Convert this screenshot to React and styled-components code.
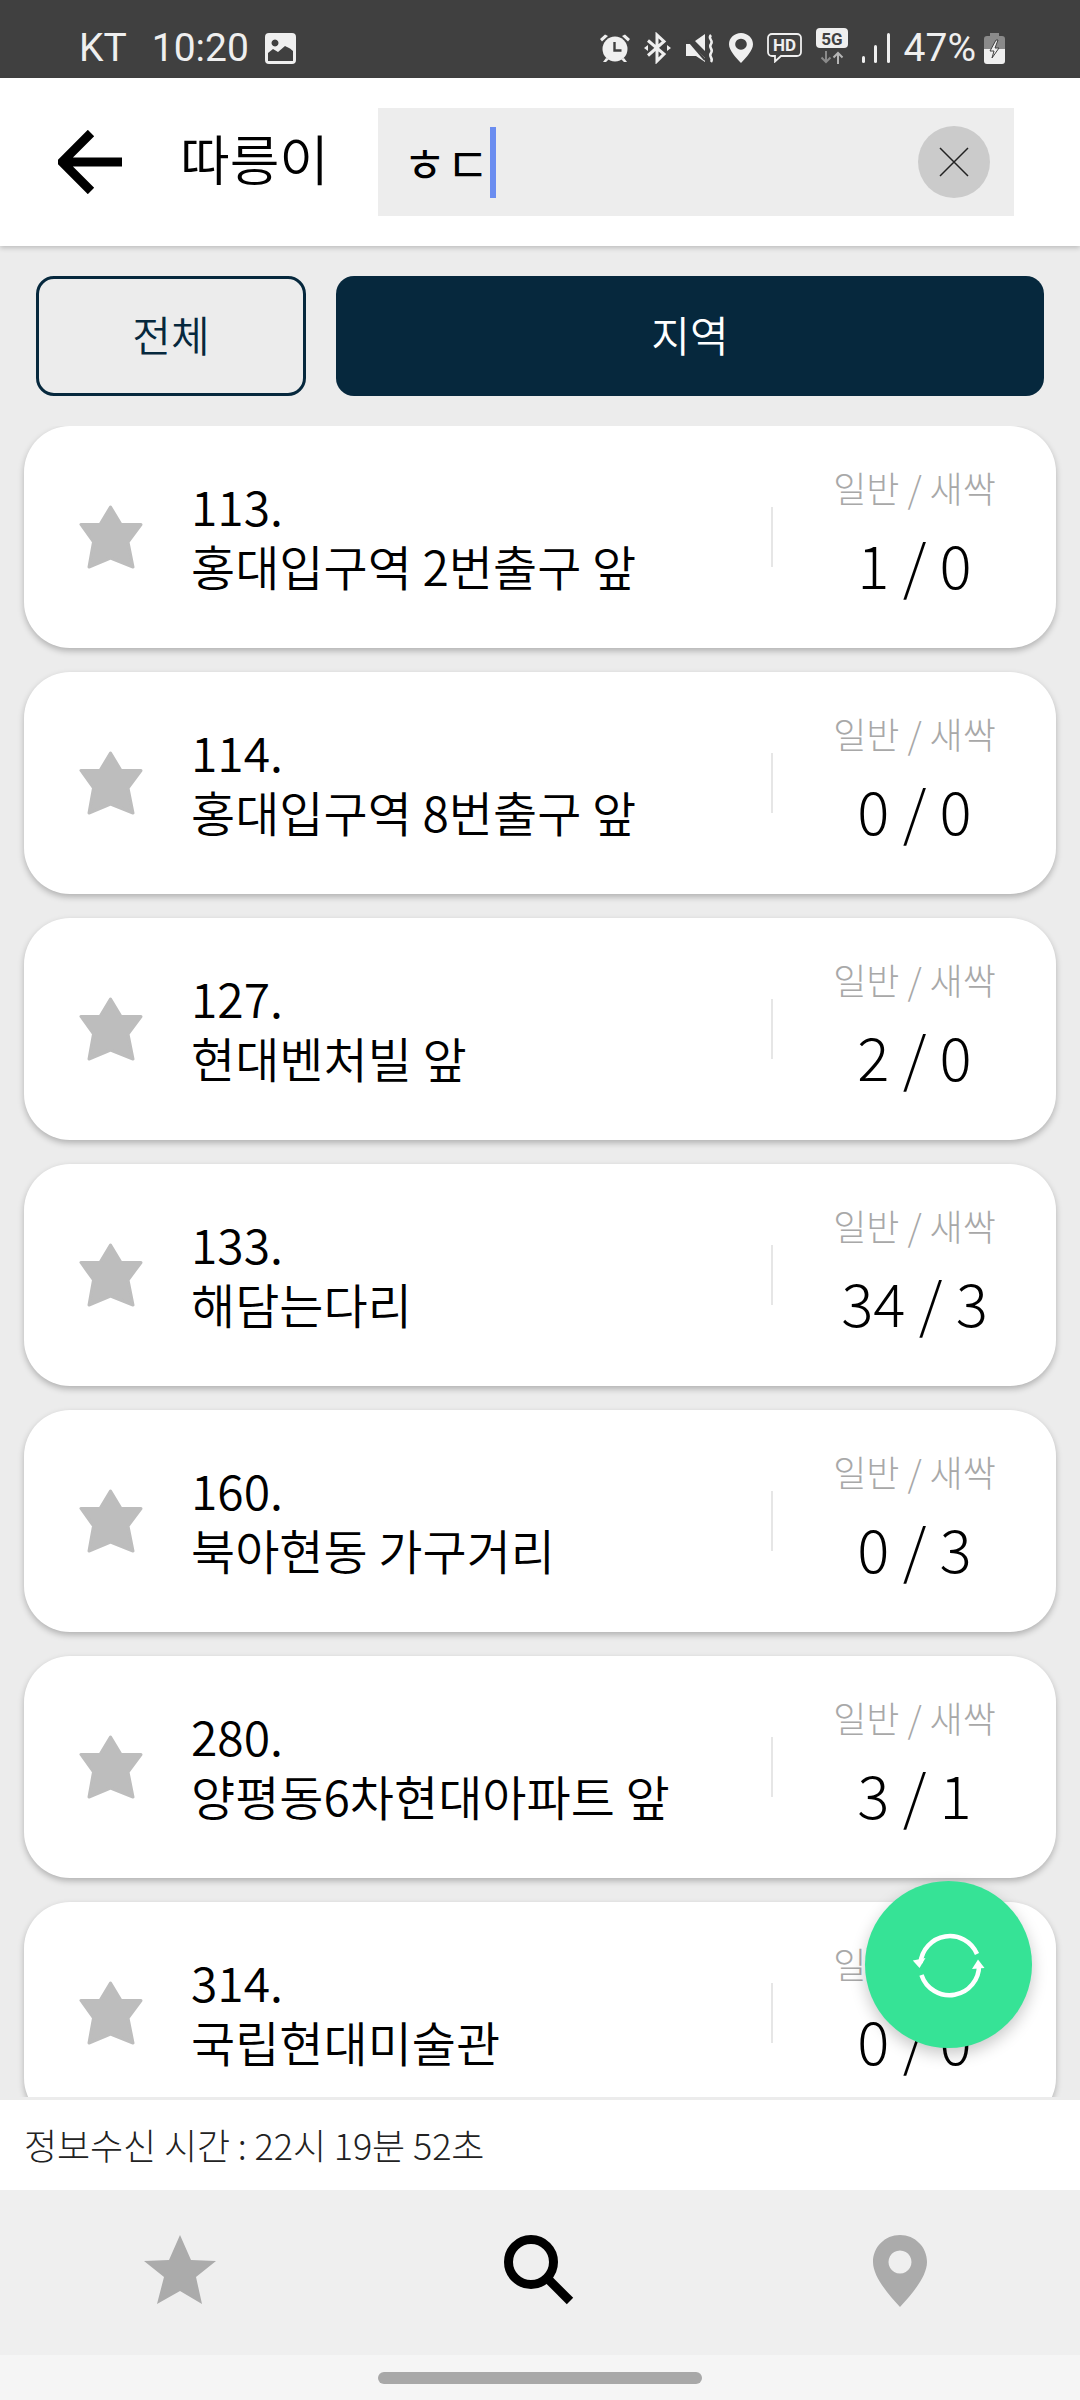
import styled, { createGlobalStyle } from 'styled-components'

const GlobalStyle = createGlobalStyle`
    html, body {
        margin: 0;
        padding: 0;
        background: #ececec;
    }
    * {
        box-sizing: border-box;
    }
`

const Page = styled.div`
    width: 1080px;
    height: 2400px;
    position: relative;
    display: flex;
    flex-direction: column;
    overflow: hidden;
    background: #ececec;
    color: #000;
    font-family: "Noto Sans CJK KR", "Noto Sans", sans-serif;
`

const StatusBar = styled.div`
    height: 78px;
    flex: none;
    background: #404040;
    color: #efefef;
    display: flex;
    align-items: center;
    justify-content: space-between;
    padding: 18px 75px 0 79px;
    font-family: Roboto, sans-serif;
    font-size: 39px;
    line-height: 1;
`

const StatusGroup = styled.div`
    display: flex;
    align-items: center;
    gap: ${(p) => p.$gap}px;
`

const StatusText = styled.span`
    margin-right: ${(p) => p.$after || 0}px;
`

const Header = styled.header`
    height: 168px;
    flex: none;
    background: #fff;
    display: flex;
    align-items: center;
    padding-left: 58px;
    box-shadow: 0 2px 5px rgba(0, 0, 0, 0.2);
    position: relative;
    z-index: 2;
`

const BackArrow = styled.svg`
    width: 64px;
    height: 64px;
    flex: none;
    fill: none;
    stroke: #000;
    stroke-width: 9;
`

const Title = styled.h1`
    margin: 0 0 8px 58px;
    width: 198px;
    flex: none;
    font-size: 54px;
    font-weight: 350;
    line-height: 60px;
`

const SearchBox = styled.div`
    width: 636px;
    height: 108px;
    background: #ededed;
    display: flex;
    align-items: center;
    padding: 0 24px 0 25px;
`

const SearchText = styled.span`
    font-size: 47px;
    line-height: 50px;
`

const Caret = styled.span`
    width: 6px;
    height: 71px;
    background: #6b8df0;
    margin-left: 1px;
`

const ClearButton = styled.button`
    width: 72px;
    height: 72px;
    margin-left: auto;
    padding: 0;
    border: none;
    border-radius: 50%;
    background: #cbcbcb;
    display: flex;
    align-items: center;
    justify-content: center;
`

const Tabs = styled.div`
    display: flex;
    gap: 30px;
    padding: 30px 36px;
    flex: none;
`

const Tab = styled.button`
    height: 120px;
    width: ${(p) => (p.$wide ? 708 : 270)}px;
    flex: none;
    border: ${(p) => (p.$active ? 'none' : '3px solid #06283d')};
    border-radius: 18px;
    background: ${(p) => (p.$active ? '#06283d' : 'transparent')};
    color: ${(p) => (p.$active ? '#fff' : '#06283d')};
    font-family: inherit;
    font-size: 42px;
    font-weight: 350;
    padding: 0 0 6px;
`

const List = styled.div`
    flex: 1;
    min-height: 0;
    overflow: hidden;
    padding: 0 24px;
    display: flex;
    flex-direction: column;
    gap: 24px;
`

const Card = styled.div`
    height: 222px;
    flex: none;
    background: #fff;
    border-radius: 46px;
    box-shadow: 0 3px 6px rgba(0, 0, 0, 0.25);
    display: flex;
    align-items: center;
    padding-left: 55px;
`

const CardStar = styled.svg`
    width: 64px;
    height: 64px;
    flex: none;
    fill: #bdbdbd;
    stroke: #bdbdbd;
    stroke-width: 3;
    stroke-linejoin: round;
`

const StationInfo = styled.div`
    flex: 1;
    margin: -4px 0 0 48px;
    font-size: 48px;
    font-weight: 350;
`

const StationNo = styled.div`
    line-height: 58px;
    margin-bottom: 2px;
`

const StationName = styled.div`
    line-height: 58px;
`

const Divider = styled.div`
    width: 2px;
    height: 60px;
    background: #e6e6e6;
    flex: none;
`

const Stats = styled.div`
    width: 283px;
    flex: none;
    display: flex;
    flex-direction: column;
    align-items: center;
    margin-top: -6px;
`

const StatsLabel = styled.div`
    font-size: 36px;
    line-height: 50px;
    font-weight: 300;
    color: #a8a8a8;
    margin-top: -3px;
`

const StatsValue = styled.div`
    font-size: 60px;
    line-height: 80px;
    font-weight: 200;
    margin-top: 11px;
`

const InfoBar = styled.div`
    height: 90px;
    flex: none;
    background: #fff;
    margin-top: 3px;
    display: flex;
    align-items: center;
    padding: 0 0 2px 24px;
    font-size: 36px;
    font-weight: 300;
    letter-spacing: -0.1px;
    color: #222;
`

const BottomNav = styled.nav`
    height: 165px;
    flex: none;
    background: #efefef;
    display: grid;
    grid-template-columns: repeat(3, 360px);
    justify-items: center;
    padding-top: 45px;
`

const NavItem = styled.div`
    width: 80px;
    height: 72px;
    display: flex;
    justify-content: center;
`

const NavStar = styled.svg`
    width: 72px;
    height: 69px;
    fill: #ababab;
`

const GestureBar = styled.div`
    height: 45px;
    flex: none;
    background: #f5f5f5;
    display: flex;
    justify-content: center;
    padding-top: 17px;
`

const GesturePill = styled.div`
    width: 324px;
    height: 12px;
    border-radius: 6px;
    background: #a8a8a8;
`

const Fab = styled.button`
    position: absolute;
    left: 865px;
    top: 1881px;
    width: 167px;
    height: 167px;
    padding: 0;
    border: none;
    border-radius: 50%;
    background: #36e396;
    box-shadow: 0 6px 16px rgba(0, 0, 0, 0.22);
    display: flex;
    align-items: center;
    justify-content: center;
`

const stations = [
    { no: '113.', name: '홍대입구역 2번출구 앞', count: '1 / 0' },
    { no: '114.', name: '홍대입구역 8번출구 앞', count: '0 / 0' },
    { no: '127.', name: '현대벤처빌 앞', count: '2 / 0' },
    { no: '133.', name: '해담는다리', count: '34 / 3' },
    { no: '160.', name: '북아현동 가구거리', count: '0 / 3' },
    { no: '280.', name: '양평동6차현대아파트 앞', count: '3 / 1' },
    { no: '314.', name: '국립현대미술관', count: '0 / 0' },
]

const PictureIcon = () => (
    <svg width="31" height="31" viewBox="0 0 31 31" style={{ display: 'block' }}>
        <path fillRule="evenodd" fill="#efefef" d="M4 0H27a4 4 0 0 1 4 4V27a4 4 0 0 1-4 4H4a4 4 0 0 1-4-4V4a4 4 0 0 1 4-4ZM10 6.500a3.500 3.500 0 1 0 .01 0ZM3 28H28V18L25 15.500 20 13 13 19 8 16 3 20Z" />
    </svg>
)

const AlarmIcon = () => (
    <svg width="30" height="30" viewBox="0 0 30 30" fill="#efefef">
        <circle cx="15" cy="16" r="12.500" />
        <path d="M5 1.500 8 3 2 8.500 0 6ZM25 1.500 22 3 28 8.500 30 6Z" />
        <path d="M6 25 3 29h3l3-3ZM24 25l3 4h-3l-3-3Z" />
        <path d="M14.500 9v8.500h7" fill="none" stroke="#404040" strokeWidth="2.400" />
    </svg>
)

const BluetoothIcon = () => (
    <svg width="27" height="32" viewBox="0 0 27 32" fill="none" stroke="#efefef" strokeWidth="3">
        <path d="M4 8.500 20 22 13 29V3l7 6.500L4 23.500" />
        <path d="M0 16l4-3v6ZM27 16l-4-3v6Z" fill="#efefef" stroke="none" />
    </svg>
)

const MuteIcon = () => (
    <svg width="30" height="29" viewBox="0 0 30 29">
        <path fill="#efefef" d="M1 10h5l1 1 13 13v4L11 22H1ZM10 7 20 0v17Z" />
        <path d="M2 5 20 26" stroke="#404040" strokeWidth="2" />
        <path d="M26 1c-4 4 3 5 0 9s3 5 0 9 3 5 0 9" fill="none" stroke="#efefef" strokeWidth="2.500" />
    </svg>
)

const PinIcon = ({ w = 24, h = 30, fill = '#efefef', hole = 11.5 }) => (
    <svg width={w} height={h} viewBox="0 0 54 72" preserveAspectRatio="none" style={{ display: 'block' }}>
        <path fillRule="evenodd" fill={fill} d={`M27 0C12 0 0 12 0 27C0 42 16 60 27 72C38 60 54 42 54 27C54 12 42 0 27 0ZM27 ${27 - hole}a${hole} ${hole} 0 1 1-.01 0Z`} />
    </svg>
)

const HdIcon = () => (
    <svg width="35" height="30" viewBox="0 0 35 30">
        <path d="M5 1H30a4 4 0 0 1 4 4V19a4 4 0 0 1-4 4H14l-6 5.500V23H5a4 4 0 0 1-4-4V5a4 4 0 0 1 4-4Z" fill="none" stroke="#efefef" strokeWidth="1.800" />
        <text x="17.500" y="18" textAnchor="middle" fill="#efefef" fontFamily="Roboto, sans-serif" fontWeight="700" fontSize="17">HD</text>
    </svg>
)

const FiveGIcon = () => (
    <svg width="32" height="36" viewBox="0 0 32 36" style={{ display: 'block', marginTop: '-4px' }}>
        <rect width="32" height="20" rx="4" fill="#efefef" />
        <text x="16" y="16.500" textAnchor="middle" fill="#404040" fontFamily="Roboto, sans-serif" fontWeight="700" fontSize="17">5G</text>
        <path d="M10 23v11M5.500 29.500 10 34l4.500-4.500" fill="none" stroke="#8a8a8a" strokeWidth="2" />
        <path d="M22 36V25M17.500 29.500 22 25l4.500 4.500" fill="none" stroke="#b5b5b5" strokeWidth="2" />
    </svg>
)

const SignalIcon = () => (
    <svg width="28" height="30" viewBox="0 0 28 30" fill="#efefef">
        <rect x="0" y="23" width="3" height="7" rx="1.500" />
        <rect x="12" y="12" width="3" height="18" rx="1.500" />
        <rect x="25" y="0" width="3" height="30" rx="1.500" />
    </svg>
)

const BatteryIcon = () => (
    <svg width="21" height="31" viewBox="0 0 21 31">
        <path d="M6 0h9v3h3a3 3 0 0 1 3 3v10H0V6a3 3 0 0 1 3-3h3Z" fill="#8a8a8a" />
        <path d="M0 16h21v12a3 3 0 0 1-3 3H3a3 3 0 0 1-3-3Z" fill="#efefef" />
        <path d="M12 7 6 18h4l-2 7 7-10h-4l3-8Z" fill="#efefef" stroke="#404040" strokeWidth="1" />
    </svg>
)

const SearchGlyph = () => (
    <svg width="72" height="72" viewBox="0 0 72 72" fill="none" stroke="#000" strokeWidth="9">
        <circle cx="27" cy="27" r="22.500" />
        <path d="M43 43 66 66" />
    </svg>
)

const RefreshGlyph = () => (
    <svg width="80" height="80" viewBox="0 0 80 80" fill="none">
        <path d="M11.500 38A29.500 29.500 0 0 1 68 29" stroke="#fff" strokeWidth="4.500" />
        <path d="M12.500 50A29.500 29.500 0 0 0 70 40" stroke="#fff" strokeWidth="4.500" />
        <path d="M3.800 35.500 16.500 33 10.500 43Z" fill="#fff" />
        <path d="M63 44 75.500 43 69 34.500Z" fill="#fff" />
    </svg>
)

const App = () => {
    return <Page>
        <GlobalStyle />
        <StatusBar>
            <StatusGroup $gap={16}>
                <StatusText $after={9}>KT</StatusText>
                <StatusText>10:20</StatusText>
                <PictureIcon />
            </StatusGroup>
            <StatusGroup $gap={14}>
                <AlarmIcon />
                <BluetoothIcon />
                <MuteIcon />
                <PinIcon w={24} h={30} hole={13} />
                <HdIcon />
                <FiveGIcon />
                <SignalIcon />
                <StatusText $after={-6}>47%</StatusText>
                <BatteryIcon />
            </StatusGroup>
        </StatusBar>

        <Header>
            <BackArrow viewBox="0 0 64 64" aria-hidden="true">
                <path d="M33 3 4 32 33 61M4 32H64" />
            </BackArrow>
            <Title>따릉이</Title>
            <SearchBox>
                <SearchText>ㅎㄷ</SearchText>
                <Caret />
                <ClearButton aria-label="지우기">
                    <svg width="30" height="30" viewBox="0 0 30 30" stroke="#222" strokeWidth="1.500">
                        <path d="M1 1 29 29M29 1 1 29" />
                    </svg>
                </ClearButton>
            </SearchBox>
        </Header>

        <Tabs>
            <Tab>전체</Tab>
            <Tab $active $wide>지역</Tab>
        </Tabs>

        <List>
            {stations.map((s) => (
                <Card key={s.no}>
                    <CardStar viewBox="-1 -1 64 64" aria-hidden="true">
                        <path d="M30.500 1 41 18.500 61 18.500 48 36 53 61 30.500 52 9 61 13.500 36 1 18.500 20 18.500Z" />
                    </CardStar>
                    <StationInfo>
                        <StationNo>{s.no}</StationNo>
                        <StationName>{s.name}</StationName>
                    </StationInfo>
                    <Divider />
                    <Stats>
                        <StatsLabel>일반 / 새싹</StatsLabel>
                        <StatsValue>{s.count}</StatsValue>
                    </Stats>
                </Card>
            ))}
        </List>

        <InfoBar>정보수신 시간 : 22시 19분 52초</InfoBar>

        <BottomNav>
            <NavItem>
                <NavStar viewBox="0 0 72 69" aria-hidden="true">
                    <path d="M36 0 47 25 72 26 52 42 58 69 36 56 13 69 20 42 0 26 25 25Z" />
                </NavStar>
            </NavItem>
            <NavItem><SearchGlyph /></NavItem>
            <NavItem><PinIcon w={54} h={72} fill="#ababab" /></NavItem>
        </BottomNav>

        <GestureBar>
            <GesturePill />
        </GestureBar>

        <Fab aria-label="새로고침">
            <RefreshGlyph />
        </Fab>
    </Page>
}

export default App
